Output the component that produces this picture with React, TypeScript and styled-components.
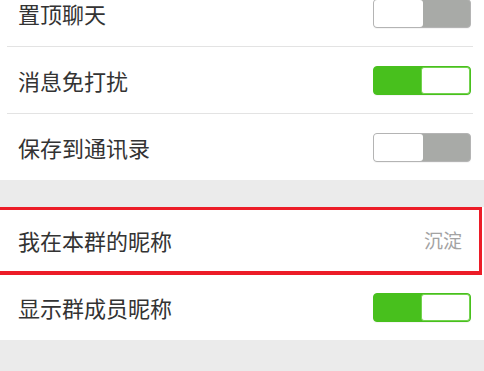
import React from "react";
import styled, { createGlobalStyle } from "styled-components";

const Global = createGlobalStyle`
  html, body { margin: 0; padding: 0; background: #ebebeb; overflow: hidden; }
  body { font-family: "Noto Sans CJK SC", "Noto Sans", sans-serif; }
`;

const Page = styled.div`
  width: 484px;
  height: 371px;
  background: #ebebeb;
  overflow: hidden;
  display: flex;
  flex-direction: column;
`;

const Group = styled.div<{ $shift?: number; $gapBefore?: number }>`
  background: #ffffff;
  display: flex;
  flex-direction: column;
  margin-top: ${(p) => (p.$shift ? `${-p.$shift}px` : `${p.$gapBefore ?? 0}px`)};
`;

const Row = styled.div`
  position: relative;
  height: 66px;
  display: flex;
  align-items: center;
  justify-content: space-between;
  padding: 0 13px 0 18px;
`;

const Label = styled.span`
  font-size: 22px;
  line-height: 24px;
  color: #333333;
`;

const Value = styled.span`
  font-size: 19px;
  line-height: 22px;
  color: #a3a3a3;
  margin-right: 9px;
`;

const Separator = styled.div`
  height: 1px;
  background: #e3e3e3;
  margin: 0 11px 0 7px;
`;

const Track = styled.div<{ $on: boolean }>`
  width: 98px;
  height: 29px;
  box-sizing: border-box;
  border-radius: 4px;
  display: flex;
  justify-content: ${(p) => (p.$on ? "flex-end" : "flex-start")};
  background: ${(p) => (p.$on ? "#48c01d" : "#a8aaa7")};
  border: 1.5px solid ${(p) => (p.$on ? "#48c01d" : "#b4b4b4")};
  box-shadow: 0 1px 0 rgba(0, 0, 0, 0.04);
`;

const Knob = styled.div<{ $on: boolean }>`
  width: 49px;
  height: 100%;
  box-sizing: border-box;
  background: #ffffff;
  border-radius: 3px;
  border: ${(p) => (p.$on ? "1.5px solid #74d24f" : "none")};
`;

const Highlight = styled.div`
  position: absolute;
  top: 0;
  left: -6px;
  right: 2px;
  bottom: -2px;
  border: 3.5px solid #ec1c27;
  border-bottom-width: 4px;
  pointer-events: none;
`;

const Toggle = ({ on }: { on: boolean }) => (
  <Track $on={on}>
    <Knob $on={on} />
  </Track>
);

export default function App() {
  return (
    <>
      <Global />
      <Page>
        <Group $shift={20}>
          <Row>
            <Label>置顶聊天</Label>
            <Toggle on={false} />
          </Row>
          <Separator />
          <Row>
            <Label>消息免打扰</Label>
            <Toggle on={true} />
          </Row>
          <Separator />
          <Row>
            <Label>保存到通讯录</Label>
            <Toggle on={false} />
          </Row>
        </Group>
        <Group $gapBefore={27}>
          <Row>
            <Label>我在本群的昵称</Label>
            <Value>沉淀</Value>
            <Highlight />
          </Row>
          <Separator />
          <Row>
            <Label>显示群成员昵称</Label>
            <Toggle on={true} />
          </Row>
        </Group>
      </Page>
    </>
  );
}
